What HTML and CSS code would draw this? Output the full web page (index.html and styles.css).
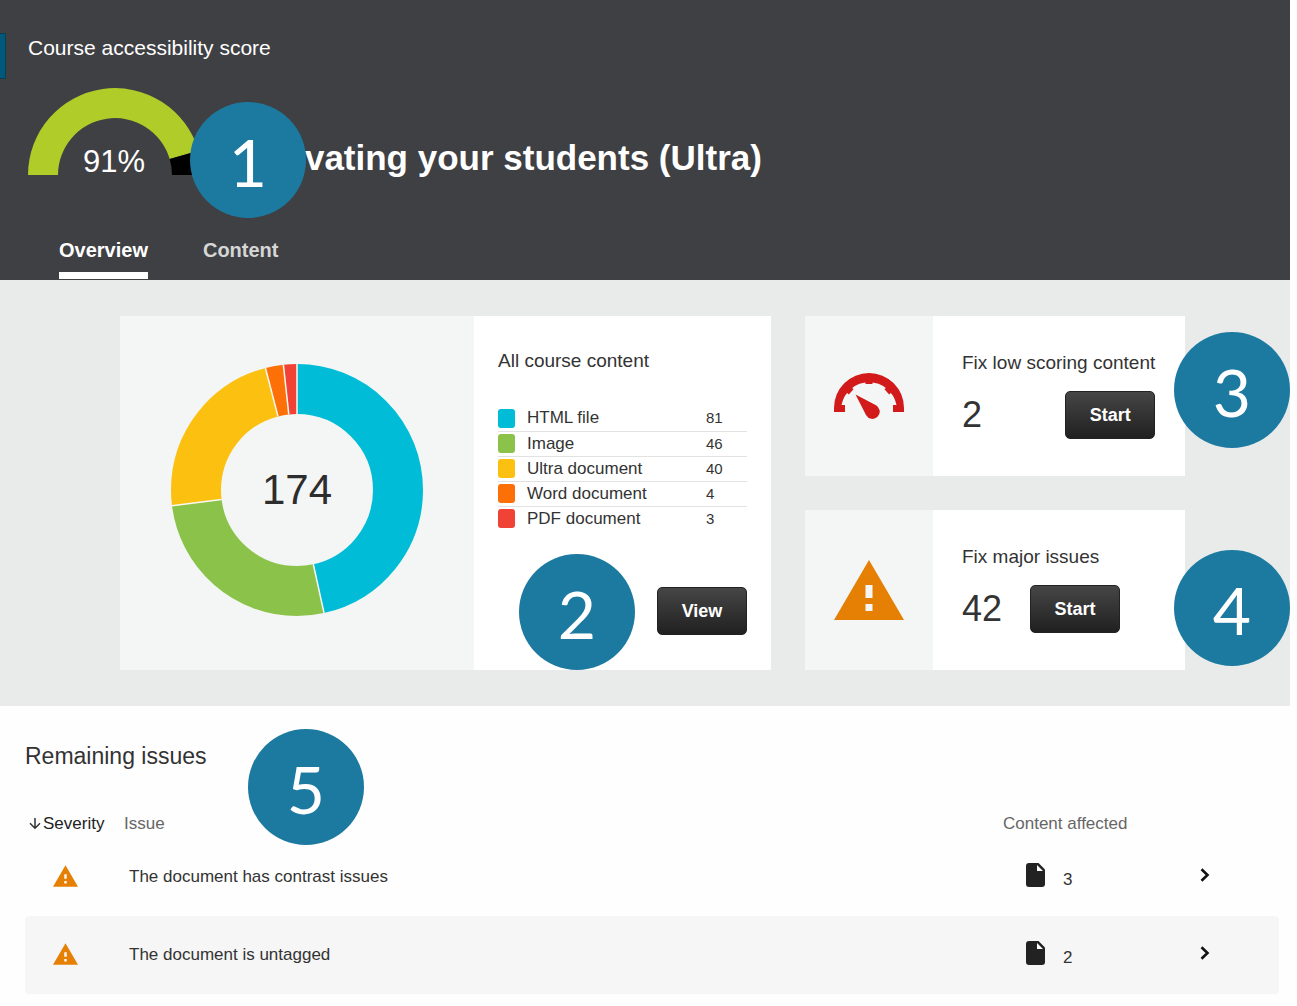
FILE: index.html
```html
<!DOCTYPE html>
<html lang="en">
<head>
<meta charset="utf-8">
<meta name="viewport" content="width=device-width, initial-scale=1">
<title>Course accessibility report</title>
<link rel="stylesheet" href="styles.css">
</head>
<body>
<svg class="sprite" width="0" height="0" aria-hidden="true">
  <symbol id="icon-warning" viewBox="0 0 70 60">
    <path fill="#e58004" d="M35 0 70 60H0z"/>
    <path fill="#f6f6f6" d="M31.500 25h7v13h-7zM31.500 44h7v7h-7z"/>
  </symbol>
  <symbol id="icon-file" viewBox="0 0 19 24">
    <path fill="#222" d="M3 0h9.500L19 6.500V21a3 3 0 0 1-3 3H3a3 3 0 0 1-3-3V3a3 3 0 0 1 3-3z"/>
    <path fill="#fff" d="M11 2v6h6z"/>
  </symbol>
  <symbol id="icon-chevron" viewBox="0 0 10 14">
    <path fill="none" stroke="#111" stroke-width="2.600" d="M1.500 1.200 7.500 7l-6 5.800"/>
  </symbol>
</svg>
<div class="page">
  <header class="header">
    <span class="edge-tab"></span>
    <p class="score-label">Course accessibility score</p>
    <div class="course">
      <svg class="score" width="174" height="87" viewBox="0 0 174 87" role="img" aria-label="91%">
        <path fill="#b0cc28" d="M0 87A87 87 0 0 1 170.500 62.700L141.700 71.100A57 57 0 0 0 30 87z"/>
        <path fill="#000" d="M170.500 62.700A87 87 0 0 1 174 87H144A57 57 0 0 0 141.700 71.100z"/>
        <text class="score-value" x="86" y="84" text-anchor="middle">91%</text>
      </svg>
      <h1 class="course-title">Motivating your students (Ultra)</h1>
    </div>
    <nav class="tabs">
      <a class="tab tab-active" href="#overview">Overview</a>
      <a class="tab" href="#content">Content</a>
    </nav>
    <span class="badge badge-score">1</span>
  </header>

  <main>
    <section class="overview" id="overview">
      <article class="card content-card">
        <div class="donut-pane">
          <svg width="252" height="252" viewBox="0 0 252 252" role="img" aria-label="174">
            <g fill="none" stroke-width="50" transform="rotate(-90 126 126)">
              <circle cx="126" cy="126" r="101" pathLength="174" stroke="#00bcd6" stroke-dasharray="81 93"/>
              <circle cx="126" cy="126" r="101" pathLength="174" stroke="#8bc34a" stroke-dasharray="46 128" stroke-dashoffset="-81"/>
              <circle cx="126" cy="126" r="101" pathLength="174" stroke="#fcc010" stroke-dasharray="40 134" stroke-dashoffset="-127"/>
              <circle cx="126" cy="126" r="101" pathLength="174" stroke="#fd7008" stroke-dasharray="4 170" stroke-dashoffset="-167"/>
              <circle cx="126" cy="126" r="101" pathLength="174" stroke="#f04336" stroke-dasharray="3 171" stroke-dashoffset="-171"/>
            </g>
            <g stroke="#f8f8f2" stroke-width="1.500">
              <path d="M126 0v50"/>
              <path d="M126 0v50" transform="rotate(167.600 126 126)"/>
              <path d="M126 0v50" transform="rotate(262.800 126 126)"/>
              <path d="M126 0v50" transform="rotate(345.500 126 126)"/>
              <path d="M126 0v50" transform="rotate(353.800 126 126)"/>
            </g>
            <text class="donut-total" x="126" y="140" text-anchor="middle">174</text>
          </svg>
        </div>
        <div class="legend-pane">
          <h2 class="card-title">All course content</h2>
          <table class="legend">
            <tbody>
              <tr><td class="legend-key"><span class="swatch swatch-html"></span></td><th scope="row">HTML file</th><td class="legend-count">81</td></tr>
              <tr><td class="legend-key"><span class="swatch swatch-image"></span></td><th scope="row">Image</th><td class="legend-count">46</td></tr>
              <tr><td class="legend-key"><span class="swatch swatch-ultra"></span></td><th scope="row">Ultra document</th><td class="legend-count">40</td></tr>
              <tr><td class="legend-key"><span class="swatch swatch-word"></span></td><th scope="row">Word document</th><td class="legend-count">4</td></tr>
              <tr><td class="legend-key"><span class="swatch swatch-pdf"></span></td><th scope="row">PDF document</th><td class="legend-count">3</td></tr>
            </tbody>
          </table>
          <button class="button view-button" type="button">View</button>
          <span class="badge badge-view">2</span>
        </div>
      </article>

      <div class="fixes">
        <article class="card fix-card">
          <div class="fix-icon">
            <svg width="70" height="46" viewBox="0 0 70 46" fill="#d21a1a" aria-hidden="true">
              <path d="M0 39V35A35 35 0 0 1 70 35V39H59V32H62.500A28 28 0 0 0 7.500 32H11V39z"/>
              <path d="M31.500 5h7v6h-7z"/>
              <path d="M31.500 5h7v6h-7z" transform="rotate(-48 35 35)"/>
              <path d="M31.500 5h7v6h-7z" transform="rotate(48 35 35)"/>
              <path d="M21.500 21.500 42 32.200A7.300 7.300 0 1 1 32 42z"/>
            </svg>
          </div>
          <div class="fix-body">
            <div class="fix-content">
              <h2 class="card-title">Fix low scoring content</h2>
              <div class="fix-action"><span class="fix-count">2</span><button class="button" type="button">Start</button></div>
            </div>
          </div>
          <span class="badge badge-fix">3</span>
        </article>
        <article class="card fix-card">
          <div class="fix-icon">
            <svg width="70" height="60" aria-hidden="true"><use href="#icon-warning"/></svg>
          </div>
          <div class="fix-body">
            <div class="fix-content">
              <h2 class="card-title">Fix major issues</h2>
              <div class="fix-action"><span class="fix-count">42</span><button class="button" type="button">Start</button></div>
            </div>
          </div>
          <span class="badge badge-fix badge-major">4</span>
        </article>
      </div>
    </section>

    <section class="remaining">
      <h2 class="remaining-title">Remaining issues</h2>
      <span class="badge badge-remaining">5</span>
      <table class="issues">
        <colgroup><col class="col-severity"><col><col class="col-affected"><col class="col-open"></colgroup>
        <thead>
          <tr>
            <th scope="col"><button class="sort" type="button"><svg width="12" height="14" viewBox="0 0 12 14" aria-hidden="true"><path fill="none" stroke="#333" stroke-width="1.500" d="M6 1v10M1 6.300l5 4.900 5-4.900"/></svg>Severity</button></th>
            <th scope="col">Issue</th>
            <th scope="col">Content affected</th>
            <td></td>
          </tr>
        </thead>
        <tbody>
          <tr>
            <td class="severity"><svg width="25" height="22" role="img" aria-label="Major"><use href="#icon-warning"/></svg></td>
            <td class="issue">The document has contrast issues</td>
            <td><div class="affected"><svg width="19" height="24" aria-hidden="true"><use href="#icon-file"/></svg><span class="affected-count">3</span></div></td>
            <td><a class="open" href="#contrast" aria-label="Open contrast issues"><svg width="10" height="14" aria-hidden="true"><use href="#icon-chevron"/></svg></a></td>
          </tr>
          <tr>
            <td class="severity"><svg width="25" height="22" role="img" aria-label="Major"><use href="#icon-warning"/></svg></td>
            <td class="issue">The document is untagged</td>
            <td><div class="affected"><svg width="19" height="24" aria-hidden="true"><use href="#icon-file"/></svg><span class="affected-count">2</span></div></td>
            <td><a class="open" href="#untagged" aria-label="Open untagged documents"><svg width="10" height="14" aria-hidden="true"><use href="#icon-chevron"/></svg></a></td>
          </tr>
        </tbody>
      </table>
    </section>
  </main>
</div>
</body>
</html>
```
FILE: styles.css
```css
* {
  box-sizing: border-box;
}

body {
  margin: 0;
  background: #fefefe;
  color: #333;
  font-family: "Liberation Sans", Arial, sans-serif;
  font-size: 17px;
}

h1,
h2,
p {
  margin: 0;
  font-weight: normal;
}

svg {
  display: block;
  flex: none;
}

table {
  border-collapse: collapse;
}

th {
  font-weight: normal;
  text-align: left;
}

th,
td {
  padding: 0;
}

.sprite {
  position: absolute;
}

.page {
  margin-right: 7px;
}

/* Numbered markers */
.badge {
  position: absolute;
  z-index: 1;
  width: 116px;
  height: 116px;
  border-radius: 50%;
  background: #1c79a0;
  color: #fff;
  font-family: Lato, sans-serif;
  font-size: 66px;
  line-height: 120px;
  text-align: center;
}

.badge-score {
  top: 102px;
  left: 190px;
}

.badge-view {
  bottom: 0;
  left: 45px;
}

.badge-fix {
  top: 16px;
  right: -105px;
}

.badge-major {
  top: 40px;
}

.badge-remaining {
  top: 23px;
  left: 248px;
}

/* Header */
.header {
  position: relative;
  padding: 36px 28px 1px;
  background: #3f4044;
  color: #fff;
}

.edge-tab {
  position: absolute;
  top: 33px;
  left: 0;
  width: 6px;
  height: 46px;
  border: 1px solid #063f56;
  border-left: 0;
  background: #00587a;
}

.score-label {
  margin-bottom: 28px;
  font-size: 21px;
  line-height: 24px;
}

.course {
  display: flex;
  align-items: flex-end;
  gap: 31px;
}

.score {
  overflow: visible;
}

.score-value {
  fill: #fff;
  font-size: 31px;
}

.course-title {
  font-size: 35px;
  font-weight: bold;
  line-height: 34px;
}

.tabs {
  display: flex;
  gap: 55px;
  margin: 63px 0 0 31px;
}

.tab {
  padding-bottom: 10px;
  border-bottom: 7px solid transparent;
  color: #d6d6d6;
  font-size: 20px;
  font-weight: bold;
  line-height: 24px;
  text-decoration: none;
}

.tab-active {
  border-color: #fff;
  color: #fff;
}

/* Overview cards */
.overview {
  display: grid;
  grid-template-columns: 651fr 380fr;
  gap: 34px;
  padding: 36px 105px 36px 120px;
  background: #e9ebea;
}

.card {
  position: relative;
  display: flex;
  background: #fff;
}

.content-card {
  display: grid;
  grid-template-columns: 354fr 297fr;
}

.card-title {
  font-size: 19px;
  line-height: 24px;
}

.button {
  width: 90px;
  height: 48px;
  padding: 0;
  border: 1px solid #222;
  border-radius: 5px;
  background: linear-gradient(#464646, #202020);
  color: #fff;
  font-family: inherit;
  font-size: 18px;
  font-weight: bold;
}

.donut-pane {
  display: flex;
  justify-content: center;
  padding: 48px 0 54px;
  background: #f4f6f5;
}

.donut-total {
  fill: #2d2d2d;
  font-size: 42px;
}

.legend-pane {
  position: relative;
  display: flex;
  flex-direction: column;
  padding: 33px 24px 35px;
}

.legend {
  width: 100%;
  margin-top: 33px;
}

.legend tr + tr {
  border-top: 1px solid #e2e2e2;
}

.legend th,
.legend td {
  height: 25px;
  line-height: 24px;
}

.legend-key {
  width: 29px;
}

.legend .legend-count {
  width: 41px;
  font-size: 15px;
}

.swatch {
  display: block;
  width: 17px;
  height: 19px;
  border-radius: 3px;
}

.swatch-html {
  background: #00bcd6;
}

.swatch-image {
  background: #8bc34a;
}

.swatch-ultra {
  background: #fcc010;
}

.swatch-word {
  background: #fd7008;
}

.swatch-pdf {
  background: #f04336;
}

.view-button {
  margin-top: auto;
  align-self: flex-end;
}

.fixes {
  display: grid;
  gap: 34px;
}

.fix-icon {
  display: flex;
  flex: none;
  align-items: center;
  justify-content: center;
  width: 128px;
  background: #f4f6f5;
}

.fix-body {
  padding: 35px 29px;
}

.fix-content {
  display: grid;
  gap: 16px;
}

.fix-action {
  display: flex;
  align-items: center;
  justify-content: space-between;
  gap: 28px;
}

.fix-count {
  font-size: 36px;
}

/* Remaining issues */
.remaining {
  position: relative;
  padding: 36px 11px 13px 25px;
}

.remaining-title {
  margin-bottom: 40px;
  font-size: 23px;
  line-height: 28px;
}

.issues {
  width: 100%;
  table-layout: fixed;
}

.issues thead {
  height: 28px;
  color: #666;
}

.issues tbody tr {
  height: 78px;
}

.issues tbody tr:nth-child(even) td {
  background: #f6f6f6;
}

.issues tbody td:first-child {
  border-radius: 4px 0 0 4px;
}

.issues tbody td:last-child {
  border-radius: 0 4px 4px 0;
}

.col-severity {
  width: 99px;
}

.col-affected {
  width: 173px;
}

.col-open {
  width: 103px;
}

.sort {
  display: flex;
  align-items: center;
  gap: 2px;
  padding: 0 0 0 4px;
  border: 0;
  background: none;
  color: #222;
  font: inherit;
}

.issues .severity {
  padding: 0 0 2px 28px;
}

.issue {
  padding-left: 5px;
}

.affected {
  display: flex;
  gap: 18px;
  height: 28px;
  padding-left: 23px;
}

.affected-count {
  align-self: flex-end;
  line-height: 22px;
}

.open {
  display: block;
  width: 10px;
  margin-left: 24px;
  padding-bottom: 4px;
}
```
